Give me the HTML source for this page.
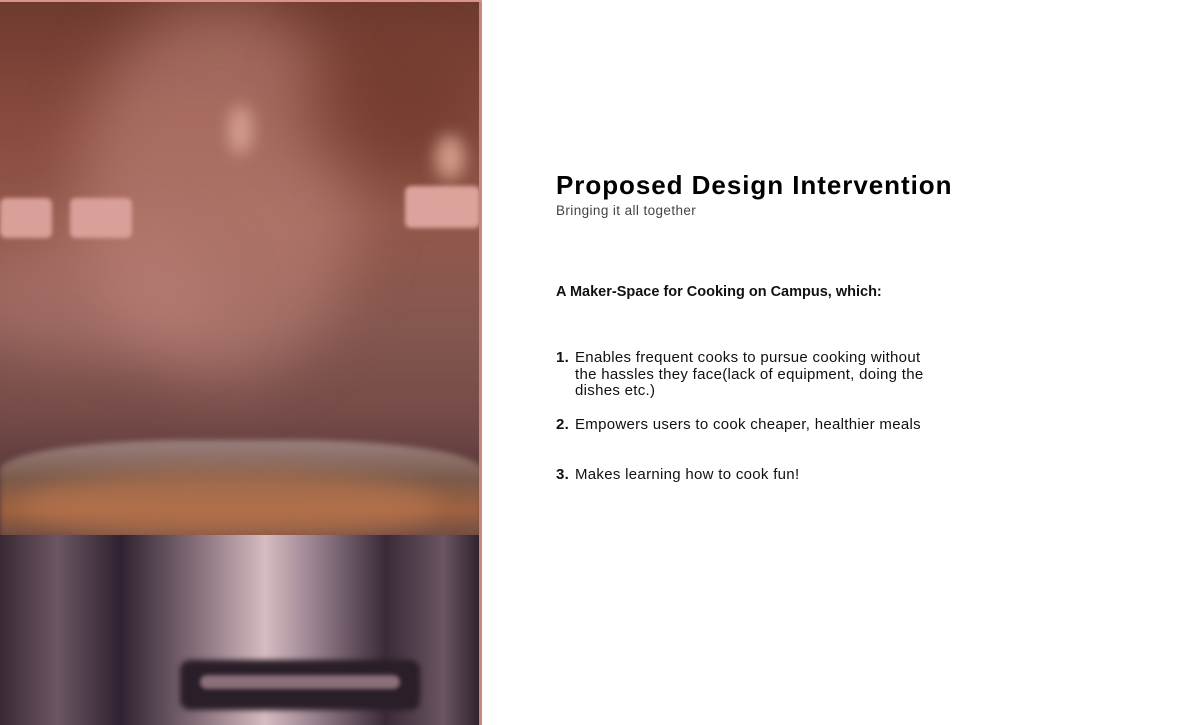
<!DOCTYPE html>
<html><head><style>
body{margin:0;width:1200px;height:725px;background:#fff;position:relative;overflow:hidden;font-family:"Liberation Sans",sans-serif;color:#111}
#img{position:absolute;left:0;top:0;width:482px;height:725px;overflow:hidden;
background:linear-gradient(180deg,#6e3a2e 0%,#85493c 15%,#93584b 30%,#85574f 45%,#744a48 58%,#5d3a3b 65%,#4a2f38 75%,#3a2632 100%)}
.b{position:absolute;border-radius:50%;filter:blur(30px)}
#img .r{position:absolute}
.t{position:absolute;left:556px;white-space:nowrap}
.n{display:inline-block;width:19px;font-weight:bold}
</style></head><body>
<div id="img">
<div class="b" style="left:80px;top:0;width:280px;height:380px;background:rgba(200,140,130,.5)"></div>
<div class="b" style="left:-40px;top:230px;width:260px;height:130px;background:rgba(190,130,125,.45)"></div>
<div class="b" style="left:300px;top:40px;width:180px;height:140px;background:rgba(110,55,40,.6)"></div>
<div class="r" style="left:0;top:198px;width:52px;height:40px;background:#d9a099;border-radius:6px;filter:blur(2px)"></div>
<div class="r" style="left:70px;top:198px;width:62px;height:40px;background:#d9a099;border-radius:6px;filter:blur(2px)"></div>
<div class="r" style="left:405px;top:186px;width:75px;height:42px;background:#dba39b;border-radius:6px;filter:blur(2px)"></div>
<div class="b" style="left:435px;top:135px;width:30px;height:45px;background:rgba(240,190,170,.7);filter:blur(8px)"></div>
<div class="b" style="left:228px;top:105px;width:25px;height:50px;background:rgba(240,190,170,.6);filter:blur(8px)"></div>
<div class="r" style="left:0;top:440px;width:482px;height:100px;background:linear-gradient(180deg,#9a8080,#7a5a4a 40%,#a0623f 70%,#6a4a45);border-radius:40% 40% 0 0/30% 30% 0 0;filter:blur(3px)"></div>
<div class="b" style="left:20px;top:470px;width:420px;height:70px;background:rgba(190,120,80,.6);filter:blur(12px)"></div>
<div class="r" style="left:0;top:535px;width:482px;height:190px;background:linear-gradient(90deg,#3a2a35 0%,#6b5662 12%,#2f2230 25%,#8c7480 42%,#d6bcc0 55%,#9a8290 65%,#3a2a38 80%,#6a5561 92%,#2b1f2a 100%)"></div>
<div class="r" style="left:180px;top:660px;width:240px;height:50px;background:#2a1e28;border-radius:10px;filter:blur(3px)"></div>
<div class="r" style="left:200px;top:675px;width:200px;height:14px;background:#8a6e78;border-radius:7px;filter:blur(2px)"></div>
<div class="r" style="left:479px;top:0;width:3px;height:725px;background:#c9877c"></div>
<div class="r" style="left:0;top:0;width:482px;height:2px;background:#d8938a"></div>
</div>
<div class="t" style="top:170px;font-size:26px;font-weight:bold;letter-spacing:0.95px;color:#000">Proposed Design Intervention</div>
<div class="t" style="top:203px;font-size:13.5px;letter-spacing:0.4px;color:#444">Bringing it all together</div>
<div class="t" style="top:284px;font-size:14.5px;font-weight:bold;color:#111">A Maker-Space for Cooking on Campus, which:</div>
<div class="t" style="top:350px;font-size:15px;line-height:16.7px;letter-spacing:0.3px;color:#111"><span class="n">1.</span>Enables frequent cooks to pursue cooking without<br><span class="n"></span>the hassles they face(lack of equipment, doing the<br><span class="n"></span>dishes etc.)</div>
<div class="t" style="top:416px;font-size:15px;letter-spacing:0.3px;color:#111"><span class="n">2.</span>Empowers users to cook cheaper, healthier meals</div>
<div class="t" style="top:466px;font-size:15px;letter-spacing:0.3px;color:#111"><span class="n">3.</span>Makes learning how to cook fun!</div>
</body></html>
